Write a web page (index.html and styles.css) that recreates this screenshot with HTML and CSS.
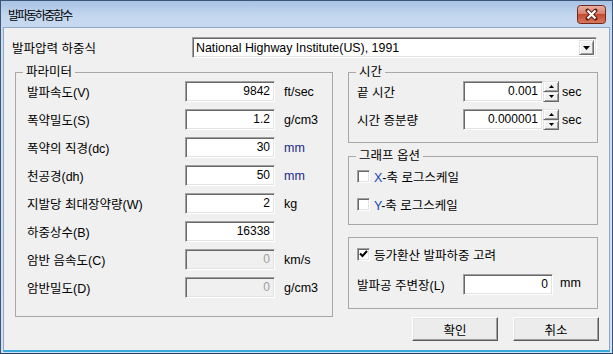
FILE: index.html
```html
<!DOCTYPE html>
<html lang="ko">
<head>
<meta charset="utf-8">
<title>발파동하중함수</title>
<link rel="stylesheet" href="styles.css">
</head>
<body>
<div class="window">
  <div class="titlebar">
    <span class="title">발파동하중함수</span>
    <span class="close" aria-label="닫기">
      <svg width="29" height="19" viewBox="0 0 29 19">
        <defs>
          <linearGradient id="cg" x1="0" y1="0" x2="0" y2="1">
            <stop offset="0" stop-color="#eab0a2"/>
            <stop offset="0.45" stop-color="#d8826d"/>
            <stop offset="0.5" stop-color="#c44a30"/>
            <stop offset="1" stop-color="#dc7a5f"/>
          </linearGradient>
        </defs>
        <rect x="0.5" y="0.5" width="28" height="18" rx="3" fill="url(#cg)" stroke="#6d2a20"/>
        <path d="M10.5 5.5 L18.5 13.5 M18.5 5.5 L10.5 13.5" stroke="#5a1c14" stroke-width="4" stroke-linecap="round"/>
        <path d="M10.5 5.5 L18.5 13.5 M18.5 5.5 L10.5 13.5" stroke="#ffffff" stroke-width="2.2"/>
      </svg>
    </span>
  </div>
  <div class="client">
    <div class="top-row">
      <span class="top-label">발파압력 하중식</span>
      <div class="combo">
        <span class="combo-text">National Highway Institute(US), 1991</span>
        <span class="combo-btn">
          <svg width="7" height="4" viewBox="0 0 7 4"><path d="M0 0 H7 L3.5 4 Z" fill="#000"/></svg>
        </span>
      </div>
    </div>
    <div class="main">
      <fieldset class="group params">
        <legend>파라미터</legend>
        <div class="prow"><span class="plbl">발파속도(V)</span><span class="field">9842</span><span class="unit">ft/sec</span></div>
        <div class="prow"><span class="plbl">폭약밀도(S)</span><span class="field">1.2</span><span class="unit">g/cm3</span></div>
        <div class="prow"><span class="plbl">폭약의 직경(dc)</span><span class="field">30</span><span class="unit navy">mm</span></div>
        <div class="prow"><span class="plbl">천공경(dh)</span><span class="field">50</span><span class="unit navy">mm</span></div>
        <div class="prow"><span class="plbl">지발당 최대장약량(W)</span><span class="field">2</span><span class="unit">kg</span></div>
        <div class="prow"><span class="plbl">하중상수(B)</span><span class="field">16338</span></div>
        <div class="prow"><span class="plbl">암반 음속도(C)</span><span class="field disabled">0</span><span class="unit">km/s</span></div>
        <div class="prow"><span class="plbl">암반밀도(D)</span><span class="field disabled">0</span><span class="unit">g/cm3</span></div>
      </fieldset>
      <div class="right">
        <fieldset class="group time">
          <legend>시간</legend>
          <div class="trow">
            <span class="tlbl">끝 시간</span>
            <span class="field tfield">0.001</span>
            <span class="spin">
              <span class="spin-btn"><svg width="5" height="3" viewBox="0 0 5 3"><path d="M2.5 0 L5 3 H0 Z" fill="#000"/></svg></span>
              <span class="spin-btn"><svg width="5" height="3" viewBox="0 0 5 3"><path d="M0 0 H5 L2.5 3 Z" fill="#000"/></svg></span>
            </span>
            <span class="sec">sec</span>
          </div>
          <div class="trow">
            <span class="tlbl">시간 증분량</span>
            <span class="field tfield">0.000001</span>
            <span class="spin">
              <span class="spin-btn"><svg width="5" height="3" viewBox="0 0 5 3"><path d="M2.5 0 L5 3 H0 Z" fill="#000"/></svg></span>
              <span class="spin-btn"><svg width="5" height="3" viewBox="0 0 5 3"><path d="M0 0 H5 L2.5 3 Z" fill="#000"/></svg></span>
            </span>
            <span class="sec">sec</span>
          </div>
        </fieldset>
        <fieldset class="group graph">
          <legend>그래프 옵션</legend>
          <div class="crow"><span class="cb"></span><span class="ctext"><span class="axis">X</span>-축 로그스케일</span></div>
          <div class="crow"><span class="cb"></span><span class="ctext"><span class="axis">Y</span>-축 로그스케일</span></div>
        </fieldset>
        <fieldset class="group equiv">
          <div class="crow"><span class="cb checked"><svg width="9" height="8" viewBox="0 0 9 8"><path d="M1 3.5 L3.5 6 L8 1" fill="none" stroke="#000" stroke-width="2"/></svg></span><span class="ctext">등가환산 발파하중 고려</span></div>
          <div class="erow">
            <span class="tlbl">발파공 주변장(L)</span>
            <span class="field efield">0</span>
            <span class="emm">mm</span>
          </div>
        </fieldset>
        <div class="buttons">
          <span class="btn">확인</span>
          <span class="btn">취소</span>
        </div>
      </div>
    </div>
  </div>
</div>
</body>
</html>
```

FILE: styles.css
```css
* { box-sizing: border-box; }
html, body { margin: 0; padding: 0; }
body {
  width: 613px;
  height: 354px;
  overflow: hidden;
  background: #ffffff;
  font-family: "Liberation Sans", "Noto Sans CJK KR", sans-serif;
  font-size: 12px;
  color: #000;
}
.window {
  width: 613px;
  height: 354px;
  display: flex;
  flex-direction: column;
  border: 1px solid #3e5677;
  border-bottom-color: #1d3f6a;
  background: linear-gradient(#a9c3e4, #c2d6ee 14px, #cddef1 40px, #d2e2f3);
}
.titlebar {
  height: 26px;
  flex: none;
  display: flex;
  align-items: center;
  padding: 0 6px 0 7px;
}
.title {
  flex: 1;
  font-family: "Noto Sans CJK KR", sans-serif;
  font-size: 12px;
  letter-spacing: -2px;
  color: #000;
}
.close { display: flex; width: 29px; height: 19px; margin-top: 1px; }
.client {
  flex: 1;
  margin: 0 2px 1px 2px;
  border: 1px solid #8ea7c6;
  border-bottom: 2px solid #3aa8d8;
  background: #f0f0f0;
  padding: 9px 10px 0 8px;
}
.top-row { display: flex; align-items: center; height: 21px; }
.top-label { width: 180px; font-size: 12.5px; }
.combo {
  width: 405px;
  height: 21px;
  display: flex;
  align-items: center;
  background: #fff;
  border: 1px solid;
  border-color: #a0a0a0 #ffffff #ffffff #a0a0a0;
  box-shadow: inset 1px 1px #696969, inset -1px -1px #e3e3e3;
  padding: 2px 2px 2px 3px;
}
.combo-text { flex: 1; font-size: 12.4px; }
.combo-btn {
  width: 15px;
  height: 15px;
  display: flex;
  align-items: center;
  justify-content: center;
  background: #f0f0f0;
  border: 1px solid;
  border-color: #e3e3e3 #696969 #696969 #e3e3e3;
  box-shadow: inset 1px 1px #fff, inset -1px -1px #a0a0a0;
}
.main {
  display: flex;
  gap: 15px;
  margin-top: 6px;
  padding-left: 3px;
}
.group {
  margin: 0;
  min-width: 0;
  border: 1px solid #a8a8a8;
}
.group legend {
  padding: 0 3px;
  line-height: 16px;
  font-size: 12.5px;
}
.params {
  width: 318px;
  height: 253px;
  padding: 1px 10px 0 11px;
  display: flex;
  flex-direction: column;
  gap: 7px;
}
.params legend { margin-left: -4px; }
.prow { display: flex; align-items: center; height: 21px; }
.plbl { width: 158px; font-size: 12.5px; }
.field {
  height: 21px;
  background: #fff;
  border: 1px solid;
  border-color: #a0a0a0 #ffffff #ffffff #a0a0a0;
  box-shadow: inset 1px 1px #696969, inset -1px -1px #e3e3e3;
  text-align: right;
  padding: 0 4px;
  line-height: 19px;
}
.prow .field { width: 90px; }
.field.disabled { background: #f0f0f0; color: #9d9d9d; }
.unit { margin-left: 9px; font-size: 12.5px; }
.navy { color: #1c2a86; }
.right { width: 250px; display: flex; flex-direction: column; }
.right legend { margin-left: -1px; }
.time {
  height: 79px;
  padding: 1px 8px 0 8px;
  display: flex;
  flex-direction: column;
  gap: 7px;
}
.trow, .erow { display: flex; align-items: center; height: 21px; }
.tlbl { width: 106px; font-size: 12.5px; }
.tfield { width: 80px; }
.spin { width: 16px; height: 21px; display: flex; flex-direction: column; }
.spin-btn {
  flex: 1;
  display: flex;
  align-items: center;
  justify-content: center;
  background: #f0f0f0;
  border: 1px solid;
  border-color: #e3e3e3 #696969 #696969 #e3e3e3;
  box-shadow: inset 1px 1px #fff, inset -1px -1px #a0a0a0;
}
.sec { margin-left: 3px; font-size: 12.5px; }
.graph {
  height: 77px;
  margin-top: 5px;
  padding: 2px 8px 0 8px;
  display: flex;
  flex-direction: column;
  gap: 8px;
}
.crow { display: flex; align-items: center; height: 20px; }
.cb {
  width: 13px;
  height: 13px;
  display: flex;
  align-items: center;
  justify-content: center;
  background: #fff;
  border: 1px solid;
  border-color: #a0a0a0 #ffffff #ffffff #a0a0a0;
  box-shadow: inset 1px 1px #696969, inset -1px -1px #e3e3e3;
  flex: none;
}
.ctext { margin-left: 4px; font-size: 12.5px; }
.axis { color: #1448b8; }
.equiv {
  height: 72px;
  margin-top: 12px;
  padding: 6px 8px 0 8px;
  display: flex;
  flex-direction: column;
  gap: 10px;
}
.efield { width: 90px; }
.emm { margin-left: 7px; margin-top: -3px; font-size: 12.5px; }
.buttons {
  display: flex;
  justify-content: flex-end;
  gap: 15px;
  margin-top: 8px;
  margin-right: -1px;
}
.btn {
  width: 86px;
  height: 24px;
  display: flex;
  align-items: center;
  justify-content: center;
  font-size: 12.5px;
  background: #ececec;
  border: 1px solid;
  border-color: #ffffff #5a5a5a #5a5a5a #ffffff;
  box-shadow: inset -1px -1px #a0a0a0, inset 1px 1px #e3e3e3;
}
```
